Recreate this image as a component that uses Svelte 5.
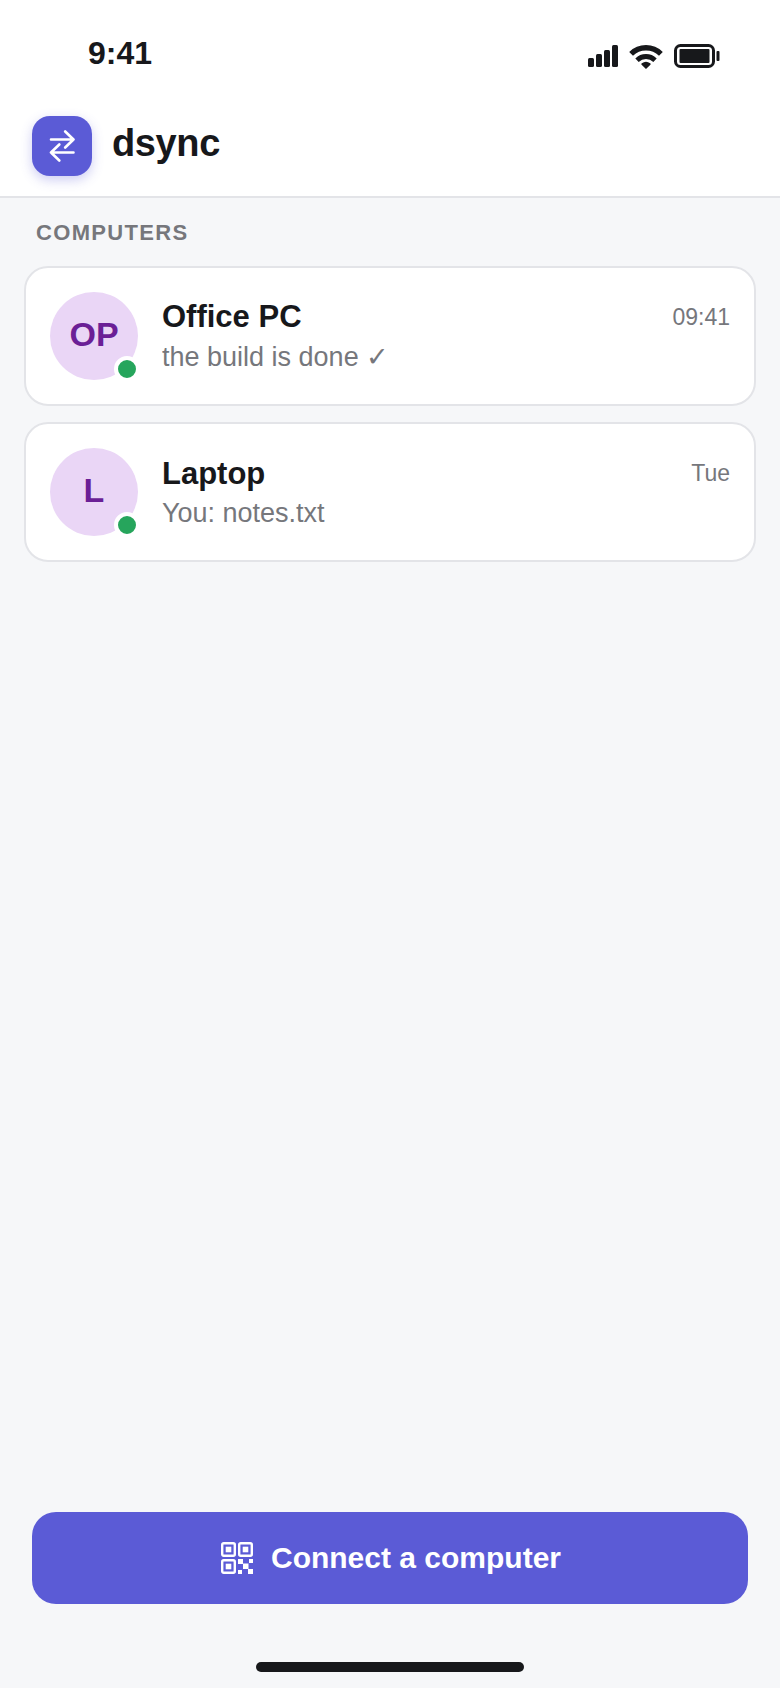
<script>
  const computers = [
    { initials: "OP", name: "Office PC", preview: "the build is done ✓", time: "09:41", online: true },
    { initials: "L", name: "Laptop", preview: "You: notes.txt", time: "Tue", online: true },
  ];

  // finder squares of the QR icon
  const finders = [[2, 2], [19, 2], [2, 19]];
</script>

<div class="screen">
  <div class="top">
    <div class="status-bar">
      <span class="clock">9:41</span>
      <div class="status-icons">
        <svg width="30" height="26" viewBox="0 0 30 26" fill="currentColor">
          <rect x="0" y="15" width="6" height="9" rx="1.5" />
          <rect x="8" y="11" width="6" height="13" rx="1.5" />
          <rect x="16" y="7" width="6" height="17" rx="1.5" />
          <rect x="24" y="2" width="6" height="22" rx="1.5" />
        </svg>
        <svg width="34" height="26" viewBox="0 0 34 26" fill="none" stroke="currentColor">
          <path d="M2.1 10.8a21.2 21.2 0 0 1 29.8 0" stroke-width="5.4" />
          <path d="M8 17.2a12.8 12.8 0 0 1 18 0" stroke-width="4.8" />
          <path d="M17 26l-4.4-4.2q-.8-.9.2-1.6a7.2 7.2 0 0 1 8.4 0q1 .7.2 1.6z" fill="currentColor" stroke="none" />
        </svg>
        <svg width="46" height="26" viewBox="0 0 46 26" fill="currentColor">
          <rect x="1.5" y="2.5" width="38" height="21" rx="5" fill="none" stroke="currentColor" stroke-width="3" />
          <rect x="5.5" y="6" width="30" height="14" rx="1" />
          <rect x="42.5" y="8" width="3" height="10" rx="1" />
        </svg>
      </div>
    </div>

    <header>
      <div class="logo">
        <svg width="32" height="32" viewBox="0 0 32 32" fill="none" stroke="currentColor" stroke-width="2.6" stroke-linecap="round" stroke-linejoin="round">
          <path d="M5 9.5h22.5M19.2 1.5l8.3 8-8.3 8" />
          <path d="M27.5 22.5H5M13.3 14.5l-8.3 8 8.3 8" />
        </svg>
      </div>
      <h1>dsync</h1>
    </header>
  </div>

  <main>
    <h2>Computers</h2>
    <ul>
      {#each computers as computer}
        <li>
          <div class="avatar">
            {computer.initials}
            {#if computer.online}
              <span class="dot"></span>
            {/if}
          </div>
          <div class="info">
            <div class="row">
              <span class="name">{computer.name}</span>
              <time>{computer.time}</time>
            </div>
            <div class="preview">{computer.preview}</div>
          </div>
        </li>
      {/each}
    </ul>
  </main>

  <footer>
    <button type="button">
      <svg width="36" height="36" viewBox="0 0 36 36" fill="currentColor">
        {#each finders as [x, y]}
          <rect x={x + 1.2} y={y + 1.2} width="12.6" height="12.6" rx="1.5" fill="none" stroke="currentColor" stroke-width="2.4" />
          <rect x={x + 4.7} y={y + 4.7} width="5.6" height="5.6" />
        {/each}
        <path d="M19 19h5v5h-5zM30 19h4v4h-4zM24 23.5h5.5v5.5h-5.5zM19 30h4v4h-4zM29 29h5v5h-5z" />
      </svg>
      Connect a computer
    </button>
    <div class="home-bar"></div>
  </footer>
</div>

<style>
  :global(body) {
    margin: 0;
    background: #f6f7f9;
  }

  .screen {
    --text-main: #17181b;
    --text-secondary: #76777c;
    --accent: #5b5bd6;
    --line: #e3e4e8;

    display: flex;
    flex-direction: column;
    min-height: 100vh;
    font-family: "Liberation Sans", Arial, sans-serif;
    color: var(--text-main);
    background: #f6f7f9;
  }

  .top {
    background: #fff;
    border-bottom: 2px solid var(--line);
  }

  .status-bar {
    display: flex;
    align-items: center;
    justify-content: space-between;
    height: 108px;
    padding: 0 60px 0 88px;
  }

  .clock {
    padding-bottom: 2px;
    font-size: 32px;
    font-weight: 700;
  }

  .status-icons {
    display: flex;
    align-items: center;
    gap: 11px;
    padding-top: 4px;
  }

  header {
    display: flex;
    align-items: center;
    gap: 20px;
    padding: 8px 32px 20px;
  }

  .logo {
    display: flex;
    align-items: center;
    justify-content: center;
    width: 60px;
    height: 60px;
    border-radius: 18px;
    color: #fff;
    background: var(--accent);
    box-shadow: 0 4px 12px rgba(91, 91, 214, 0.3);
  }

  h1 {
    margin: 0 0 6px;
    font-size: 38px;
    letter-spacing: -0.01em;
  }

  main {
    flex: 1;
    padding: 22px 24px;
  }

  h2 {
    margin: 0 12px 20px;
    font-size: 22px;
    line-height: 26px;
    letter-spacing: 0.06em;
    text-transform: uppercase;
    color: var(--text-secondary);
  }

  ul {
    display: flex;
    flex-direction: column;
    gap: 16px;
    margin: 0;
    padding: 0;
    list-style: none;
  }

  li {
    display: flex;
    align-items: center;
    gap: 24px;
    padding: 24px;
    border: 2px solid var(--line);
    border-radius: 24px;
    background: #fff;
  }

  .avatar {
    position: relative;
    display: flex;
    align-items: center;
    justify-content: center;
    box-sizing: border-box;
    width: 88px;
    height: 88px;
    padding-bottom: 3px;
    border-radius: 50%;
    font-size: 34px;
    font-weight: 700;
    color: #6b1f96;
    background: #ead6f6;
  }

  .dot {
    position: absolute;
    right: -2px;
    bottom: -2px;
    width: 18px;
    height: 18px;
    border: 4px solid #fff;
    border-radius: 50%;
    background: #26a55c;
  }

  .info {
    flex: 1;
    min-width: 0;
  }

  .row {
    display: flex;
    align-items: center;
    justify-content: space-between;
    margin-bottom: 6px;
  }

  .name {
    font-size: 31px;
    font-weight: 700;
  }

  time {
    font-size: 23px;
    color: var(--text-secondary);
  }

  .preview {
    overflow: hidden;
    font-size: 27px;
    white-space: nowrap;
    text-overflow: ellipsis;
    color: var(--text-secondary);
  }

  footer {
    display: flex;
    flex-direction: column;
    align-items: center;
    gap: 58px;
    padding: 0 32px 16px;
  }

  button {
    display: flex;
    align-items: center;
    justify-content: center;
    gap: 16px;
    width: 100%;
    height: 92px;
    border: none;
    border-radius: 24px;
    font: 700 30px "Liberation Sans", Arial, sans-serif;
    color: #fff;
    background: var(--accent);
    cursor: pointer;
  }

  .home-bar {
    width: 268px;
    height: 10px;
    border-radius: 5px;
    background: var(--text-main);
  }
</style>
